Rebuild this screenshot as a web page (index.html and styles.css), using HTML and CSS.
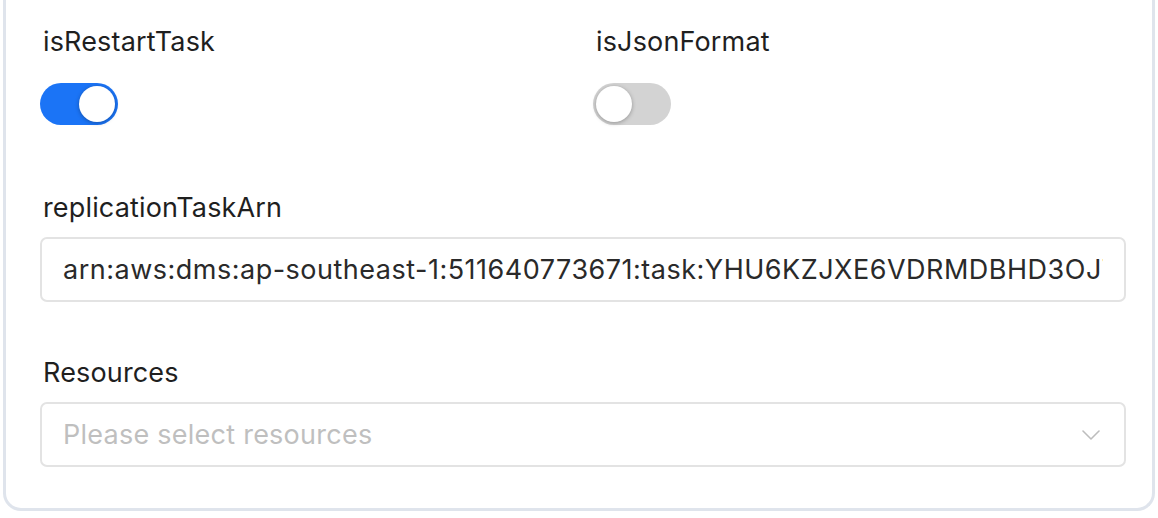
FILE: index.html
```html
<!DOCTYPE html>
<html>
<head>
<meta charset="utf-8">
<link rel="stylesheet" href="styles.css">
</head>
<body>
<div class="card">
  <div class="switch-row">
    <div class="field">
      <div class="label">isRestartTask</div>
      <div class="switch on"><span class="knob"></span></div>
    </div>
    <div class="field">
      <div class="label">isJsonFormat</div>
      <div class="switch"><span class="knob"></span></div>
    </div>
  </div>
  <div class="field input-field">
    <div class="label">replicationTaskArn</div>
    <div class="input"><span class="value">arn:aws:dms:ap-southeast-1:511640773671:task:YHU6KZJXE6VDRMDBHD3OJT</span></div>
  </div>
  <div class="field input-field">
    <div class="label">Resources</div>
    <div class="input select">
      <span class="placeholder">Please select resources</span>
      <svg class="chevron" width="18" height="10" viewBox="0 0 18 10"><polyline points="1,1 9,9 17,1" fill="none" stroke="#bdbdbd" stroke-width="1.6" stroke-linecap="round" stroke-linejoin="round"/></svg>
    </div>
  </div>
</div>
</body>
</html>
```

FILE: styles.css
```css
html, body {
  margin: 0;
  padding: 0;
  background: #ffffff;
}
body {
  font-family: Inter, "Liberation Sans", sans-serif;
  color: #2b2b2b;
  height: 518px;
  overflow: hidden;
}
.card {
  box-sizing: border-box;
  margin: 0 3px 0 3px;
  height: 511px;
  border: 3px solid #dfe4ec;
  border-top: none;
  border-radius: 0 0 18px 18px;
  padding: 26px 26px 40px 34px;
  background: #fff;
  display: flex;
  flex-direction: column;
  gap: 55px;
}
.switch-row {
  display: grid;
  grid-template-columns: 1fr 1fr;
  column-gap: 20px;
  margin-bottom: 12px;
}
.field {
  display: flex;
  flex-direction: column;
  gap: 25px;
}
.input-field {
  gap: 13px;
}
.label {
  font-size: 27px;
  line-height: 32px;
  letter-spacing: 0.15px;
  color: #1f1f1f;
  padding-left: 3px;
}
.switch {
  position: relative;
  width: 78px;
  height: 42px;
  border-radius: 21px;
  background: #d3d3d3;
}
.switch.on {
  background: #1b74f6;
}
.knob {
  position: absolute;
  top: 3px;
  left: 3px;
  width: 36px;
  height: 36px;
  border-radius: 50%;
  background: #fff;
  box-shadow: 0 1px 4px rgba(0, 0, 0, 0.3);
}
.switch.on .knob {
  left: 39px;
}
.input {
  box-sizing: border-box;
  height: 65px;
  border: 2px solid #e3e3e3;
  border-radius: 7px;
  padding: 0 21px;
  display: flex;
  align-items: center;
  font-size: 27px;
  line-height: 32px;
  letter-spacing: 0.15px;
  color: #2a2a2a;
  white-space: nowrap;
  overflow: hidden;
}
.value {
  flex: 1;
  min-width: 0;
  overflow: hidden;
  letter-spacing: 0.5px;
}
.select {
  justify-content: space-between;
  padding-right: 24px;
}
.placeholder {
  color: #bfbfbf;
  letter-spacing: 0.25px;
}
.chevron {
  flex: none;
}
```
